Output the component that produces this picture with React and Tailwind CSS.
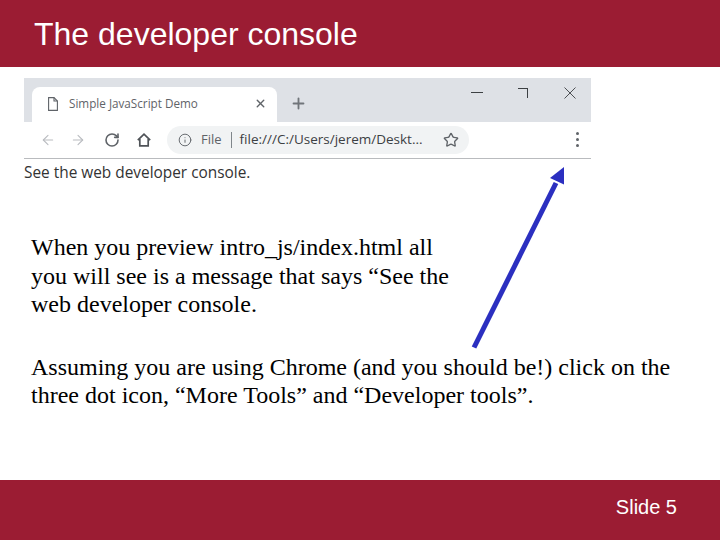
import React from 'react'
import { ArrowLeft, ArrowRight, RotateCw, Info, Star, X, Plus } from 'lucide-react'

const TabStrip = () => (
    <div className="h-[44px] bg-[#dee1e6] flex items-end relative">
        <div className="ml-[8px] w-[245px] h-[35px] bg-white rounded-t-[8px] flex items-center pl-[16px] pb-[2px]">
            <svg width="10" height="14" viewBox="0 0 10 14" fill="none" stroke="#5f6368" strokeWidth="1.1" className="shrink-0">
                <path d="M0.6 0.6H6L9.4 4V13.4H0.6Z" />
                <path d="M6 0.6V4H9.4" />
            </svg>
            <span className="ml-[11px] w-[185px] text-[11.7px] text-[#5f6368] font-['Open_Sans',sans-serif] whitespace-nowrap">Simple JavaScript Demo</span>
            <X size={13} strokeWidth={2.6} color="#5f6368" />
        </div>
        <div className="ml-[13px] mb-[10px]">
            <Plus size={17} strokeWidth={2.6} color="#70757a" />
        </div>
        <div className="ml-auto flex items-start h-full pt-[8px] pr-[15px]">
            <div className="w-[12px] h-px bg-[#3c4043] mt-[6px]" />
            <div className="ml-[35px] w-[10px] h-[10px] mt-[2px] border-t border-r border-[#3c4043]" />
            <svg width="12" height="12" viewBox="0 0 12 12" stroke="#3c4043" strokeWidth="0.9" className="ml-[36px] mt-[1px]">
                <path d="M0.5 0.5L11.5 11.5M11.5 0.5L0.5 11.5" />
            </svg>
        </div>
    </div>
)

const Toolbar = () => (
    <div className="h-[37px] border-b border-[#b9bbbe] flex items-center bg-white pb-px">
        <ArrowLeft size={16} strokeWidth={1.6} color="#b9bcc0" className="ml-[16px]" />
        <ArrowRight size={16} strokeWidth={1.6} color="#b9bcc0" className="ml-[14px]" />
        <RotateCw size={16} strokeWidth={2.4} color="#5f6368" className="ml-[18px]" />
        <svg width="14" height="14" viewBox="0 0 14 14" fill="none" stroke="#4f5358" strokeWidth="1.7" className="ml-[17px]">
            <path d="M0.8 7.2L7 1.2L13.2 7.2M2.8 6V12.8H11.2V6" />
        </svg>
        <div className="ml-[16px] w-[302px] h-[28px] rounded-full bg-[#f1f3f4] flex items-center pl-[11px] font-['Open_Sans',sans-serif]">
            <Info size={14} strokeWidth={1.6} color="#5f6368" />
            <span className="ml-[9px] text-[13px] text-[#5f6368]">File</span>
            <div className="ml-[9px] w-px h-[16px] bg-[#80868b]" />
            <span className="ml-[8px] w-[203px] text-[13.5px] text-[#3c4043] whitespace-nowrap">file:///C:/Users/jerem/Deskt...</span>
            <Star size={16} strokeWidth={2} color="#5f6368" />
        </div>
        <div className="ml-auto mr-[12px] flex flex-col gap-[3px]">
            <div className="w-[3px] h-[3px] rounded-full bg-[#5f6368]" />
            <div className="w-[3px] h-[3px] rounded-full bg-[#5f6368]" />
            <div className="w-[3px] h-[3px] rounded-full bg-[#5f6368]" />
        </div>
    </div>
)

const App = () => {
    return (
        <div className="w-[720px] h-[540px] relative flex flex-col bg-white overflow-hidden">
            <header className="h-[67px] shrink-0 bg-[#9b1c33] pl-[34px] pt-[16px]">
                <h1 className="text-[32px] leading-[37px] text-white font-['Liberation_Sans',Arial,sans-serif]">The developer console</h1>
            </header>

            <main className="flex-1 pt-[11px]">
                <div className="ml-[24px] w-[567px]">
                    <TabStrip />
                    <Toolbar />
                    <p className="text-[15.4px] leading-[20px] pt-[4px] text-[#333] font-['Open_Sans',sans-serif]">See the web developer console.</p>
                </div>
                <div className="pl-[31px] pt-[50px] text-[24px] leading-[28.6px] text-black font-['Liberation_Serif','Times_New_Roman',serif]">
                    <p>When you preview intro_js/index.html all<br />you will see is a message that says “See the<br />web developer console.</p>
                    <p className="mt-[34px]">Assuming you are using Chrome (and you should be!) click on the<br />three dot icon, “More Tools” and “Developer tools”.</p>
                </div>
            </main>

            <footer className="h-[60px] shrink-0 bg-[#9b1c33] flex justify-end pr-[43px] pt-[15px]">
                <span className="text-[20px] leading-[24px] text-white font-['Liberation_Sans',Arial,sans-serif]">Slide 5</span>
            </footer>

            <svg width="720" height="540" viewBox="0 0 720 540" className="absolute inset-0 pointer-events-none">
                <path d="M474 347.500L556 183" stroke="#2b2fc0" strokeWidth="5" fill="none" />
                <path d="M564 167L564 184.500L550 178Z" fill="#2b2fc0" />
            </svg>
        </div>
    )
}

export default App
